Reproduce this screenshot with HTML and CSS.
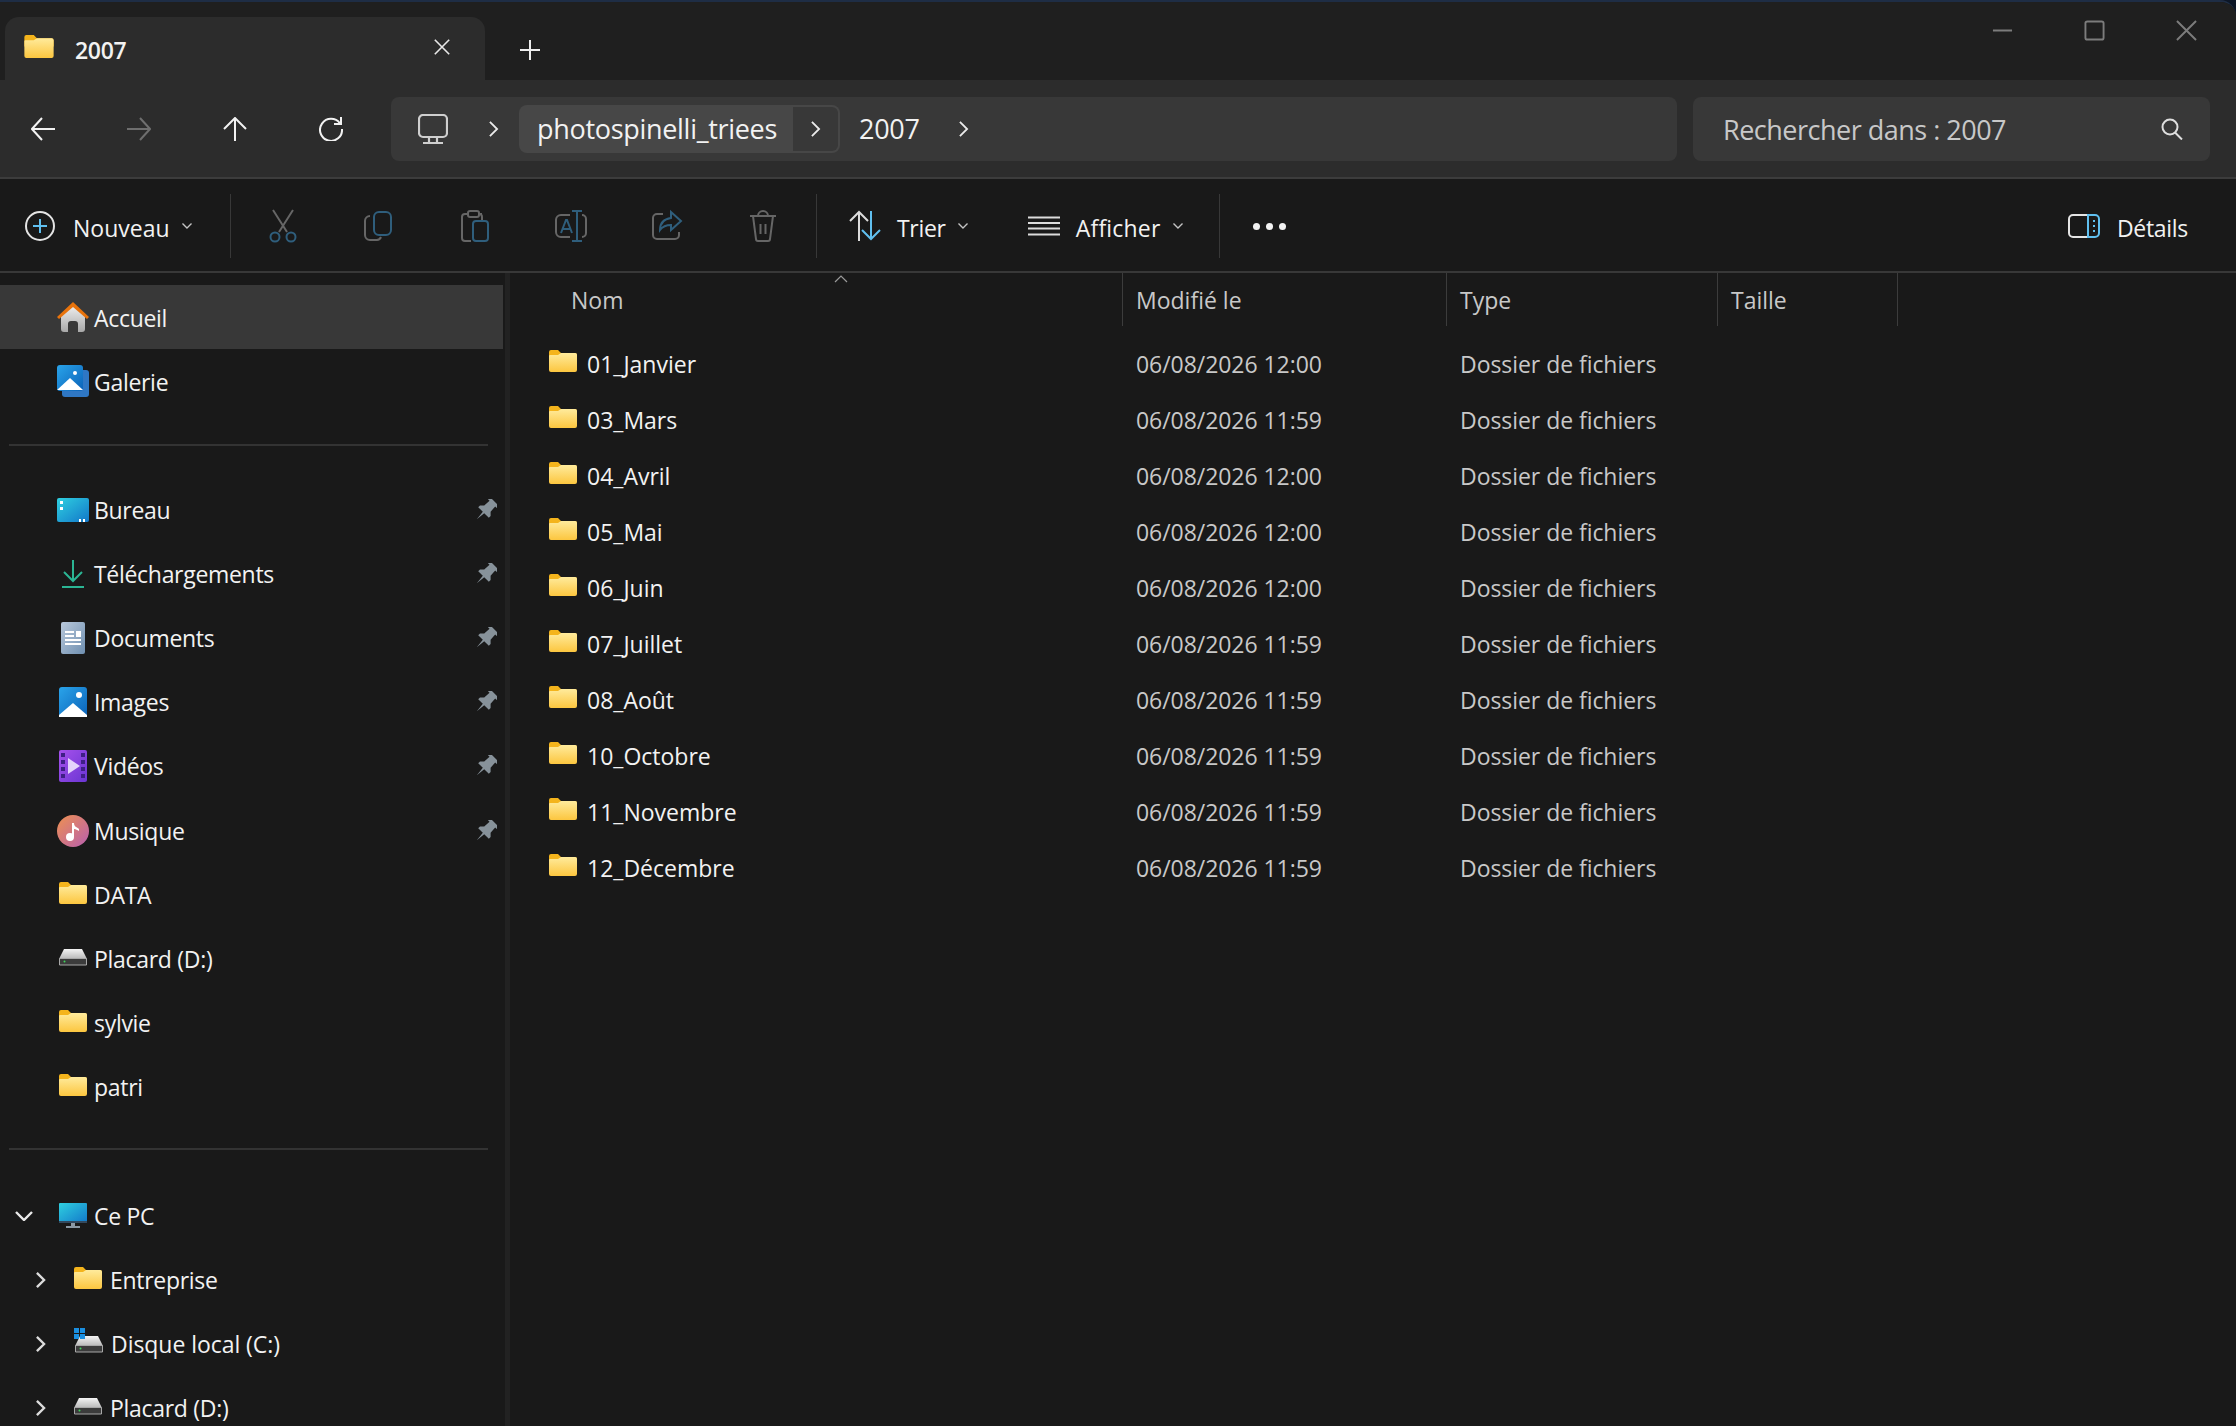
FILE: index.html
```html
<!DOCTYPE html>
<html lang="fr">
<head>
  <meta charset="UTF-8" />
  <title>2007 - Explorateur de fichiers</title>
  <link rel="stylesheet" href="styles.css">
</head>
<body>

  <!-- Shared icons -->
  <svg class="defs" aria-hidden="true">
    <defs>
      <linearGradient id="gFolder" x1="0" y1="0" x2="0" y2="1"><stop offset="0" stop-color="#ffeb9c"/><stop offset="1" stop-color="#fcc63f"/></linearGradient>
      <linearGradient id="gBlue" x1="0" y1="0" x2="1" y2="1"><stop offset="0" stop-color="#2aa4ea"/><stop offset="1" stop-color="#0b62b8"/></linearGradient>
      <linearGradient id="gCyan" x1="0" y1="0" x2="1" y2="1"><stop offset="0" stop-color="#2fd0e0"/><stop offset="1" stop-color="#1277c9"/></linearGradient>
      <linearGradient id="gDoc" x1="0" y1="0" x2="1" y2="1"><stop offset="0" stop-color="#b9c9dc"/><stop offset="1" stop-color="#6f8fb0"/></linearGradient>
      <linearGradient id="gPurple" x1="0" y1="0" x2="1" y2="1"><stop offset="0" stop-color="#a651ec"/><stop offset="1" stop-color="#6a35d2"/></linearGradient>
      <linearGradient id="gMusic" x1="0" y1="0" x2="1" y2="1"><stop offset="0" stop-color="#ee9150"/><stop offset="1" stop-color="#b85fb0"/></linearGradient>
      <linearGradient id="gHouse" x1="0" y1="0" x2="0" y2="1"><stop offset="0" stop-color="#f0f0f0"/><stop offset="1" stop-color="#a8a8a8"/></linearGradient>
      <linearGradient id="gDrive" x1="0" y1="0" x2="0" y2="1"><stop offset="0" stop-color="#f4f4f4"/><stop offset="1" stop-color="#b8b8b8"/></linearGradient>

      <symbol id="folder" viewBox="0 0 28 22">
        <path fill="#f4b41c" d="M0 2a2 2 0 0 1 2-2h7l3 3h14a2 2 0 0 1 2 2v6H0z"/>
        <path fill="url(#gFolder)" d="M0 6a1 1 0 0 1 1-1h8l3-2h14a2 2 0 0 1 2 2v15a2 2 0 0 1-2 2H2a2 2 0 0 1-2-2z"/>
      </symbol>
      <symbol id="drive" viewBox="0 0 28 18">
        <path fill="url(#gDrive)" d="M5 1h18l5 10H0z"/>
        <path fill="#3b3b3b" stroke="#a8a8a8" d="M.5 10.5h27v6.500h-27z"/>
        <circle cx="5.500" cy="13.500" r="1" fill="#3fd45a"/>
      </symbol>
      <symbol id="pin" viewBox="0 0 22 22">
        <path fill="#87929a" transform="rotate(45 11 11)" d="M5.500-1h11a1 1 0 0 1 0 3H15l.5 7 3 3v2.500H12L11 24l-1-9.500H3.500V12l3-3 .5-7H5.500a1 1 0 0 1 0-3z"/>
      </symbol>
      <symbol id="caret" viewBox="0 0 12 8">
        <path fill="none" stroke="currentColor" stroke-width="1.400" d="M1.500 1.500L6 6l4.500-4.500"/>
      </symbol>
      <symbol id="chev" viewBox="0 0 12 20">
        <path fill="none" stroke="currentColor" stroke-width="2" d="M2 2l8 8-8 8"/>
      </symbol>
      <symbol id="chev-bold" viewBox="0 0 12 20">
        <path fill="none" stroke="currentColor" stroke-width="2.600" d="M2 2l8 8-8 8"/>
      </symbol>
    </defs>
  </svg>

  <div class="window">

    <!-- Tabs -->
    <div class="titlebar">
      <div class="tab">
        <svg class="tab-folder"><use href="#folder"/></svg>
        <span class="tab-name">2007</span>
        <svg class="tab-close" viewBox="0 0 20 20"><path d="M2 2l16 16M18 2L2 18"/></svg>
      </div>
      <svg class="tab-add" viewBox="0 0 20 20"><path d="M10 0v20M0 10h20"/></svg>
      <div class="win-btns">
        <svg class="win-btn" viewBox="0 0 22 22"><path d="M1 11h20"/></svg>
        <svg class="win-btn" viewBox="0 0 22 22"><rect x="1.500" y="1.500" width="19" height="19" rx="2"/></svg>
        <svg class="win-btn" viewBox="0 0 22 22"><path d="M1 1l20 20M21 1L1 21"/></svg>
      </div>
    </div>

    <!-- Address row -->
    <div class="navbar">
      <svg class="nav-icon" viewBox="0 0 24 24"><path d="M24 12H1M11 1L1 12l10 11"/></svg>
      <svg class="nav-icon off" viewBox="0 0 24 24"><path d="M0 12h23M13 1l10 11-10 11"/></svg>
      <svg class="nav-icon" viewBox="0 0 24 24"><path d="M12 24V1M1 12L12 1l11 11"/></svg>
      <svg class="nav-icon" viewBox="0 0 24 24"><path d="M21 6.500A11 11 0 1 0 23 12"/><path d="M22 0v7h-7"/></svg>

      <div class="address">
        <svg class="pc-icon" viewBox="0 0 30 30"><rect x="1" y="1" width="28" height="22" rx="4"/><path d="M11 23v5M19 23v5M5 29h20"/></svg>
        <svg class="crumb-chev"><use href="#chev"/></svg>
        <span class="crumb">photospinelli_triees</span>
        <span class="crumb-split"><svg class="crumb-chev"><use href="#chev"/></svg></span>
        <span class="crumb-last">2007</span>
        <svg class="crumb-chev"><use href="#chev"/></svg>
      </div>

      <div class="search">
        <span class="search-text">Rechercher dans : 2007</span>
        <svg class="search-icon" viewBox="0 0 22 22"><circle cx="9" cy="9" r="7.500"/><path d="M14 14.500l7 7"/></svg>
      </div>
    </div>

    <!-- Command bar -->
    <div class="cmdbar">
      <div class="cmd cmd-new">
        <svg class="cmd-plus" viewBox="0 0 30 30"><circle cx="15" cy="15" r="14"/><path class="accent" d="M15 8v14M8 15h14"/></svg>
        <span>Nouveau</span>
        <svg class="cmd-caret"><use href="#caret"/></svg>
      </div>
      <div class="cmd-sep"></div>

      <div class="cmd-tools">
        <svg class="tool" viewBox="0 0 32 32"><path d="M6 0l14 22M26 0L12 22"/><g class="dim"><circle cx="8" cy="27" r="4.500"/><circle cx="24" cy="27" r="4.500"/></g></svg>
        <svg class="tool" viewBox="0 0 32 32"><path d="M7 6a5 5 0 0 0-5 5v14a5 5 0 0 0 5 5h7a5 5 0 0 0 4-3"/><rect class="dim" x="11" y="2" width="17" height="23" rx="5"/></svg>
        <svg class="tool" viewBox="0 0 32 32"><path d="M9 4H6a3 3 0 0 0-3 3v21a3 3 0 0 0 3 3h6M23 4h-3v0a3 3 0 0 1 3 3v3"/><rect x="9" y="1" width="11" height="6" rx="2"/><rect class="dim" x="14" y="11" width="15" height="20" rx="3"/></svg>
        <svg class="tool" viewBox="0 0 32 32"><path d="M15 5H6a5 5 0 0 0-5 5v12a5 5 0 0 0 5 5h9M27 5a4 4 0 0 1 4 4v14a4 4 0 0 1-4 4"/><g class="dim"><path d="M6 23l5-13h1l5 13M8 19h8"/><path d="M22 1v30M17 1h10M17 31h10"/></g></svg>
        <svg class="tool" viewBox="0 0 32 32"><path d="M12 4H6a4 4 0 0 0-4 4v17a4 4 0 0 0 4 4h18a4 4 0 0 0 4-4v-3"/><path class="dim" d="M20 2l10 9-10 9v-5c-5 0-8 1-11 5 0-7 4-11 11-12z"/></svg>
        <svg class="tool" viewBox="0 0 32 32"><path d="M3 6h26M6 6l3 23a2 2 0 0 0 2 2h10a2 2 0 0 0 2-2l3-23M11 6a5 5 0 0 1 10 0M13.500 14v10M18.500 14v10"/></svg>
      </div>
      <div class="cmd-sep"></div>

      <div class="cmd cmd-sort">
        <svg class="cmd-arrows" viewBox="0 0 32 32"><path d="M10 31V2M1 11l9-9 9 9"/><path class="accent" d="M22 1v28M13 20l9 9 9-9"/></svg>
        <span>Trier</span>
        <svg class="cmd-caret"><use href="#caret"/></svg>
      </div>
      <div class="cmd cmd-view">
        <svg class="cmd-lines" viewBox="0 0 32 20"><path d="M0 1.500h32M0 7h32M0 12.500h32M0 18.500h32"/></svg>
        <span>Afficher</span>
        <svg class="cmd-caret"><use href="#caret"/></svg>
      </div>
      <div class="cmd-sep"></div>

      <div class="cmd-more"><i></i><i></i><i></i></div>

      <div class="cmd cmd-details">
        <svg class="cmd-panel" viewBox="0 0 32 24"><path d="M20 1H5a4 4 0 0 0-4 4v14a4 4 0 0 0 4 4h15"/><path class="accent" d="M20 1h7a4 4 0 0 1 4 4v14a4 4 0 0 1-4 4h-7zM25 7h2M25 12h2M25 17h2"/></svg>
        <span>Détails</span>
      </div>
    </div>

    <div class="main">

      <!-- Navigation pane -->
      <nav class="sidebar">
        <div class="row row-top active">
          <svg class="row-icon home" viewBox="0 0 32 30"><path fill="url(#gHouse)" d="M4 12L16 3l12 9v15a3 3 0 0 1-3 3h-4v-8a3 3 0 0 0-3-3h-4a3 3 0 0 0-3 3v8H7a3 3 0 0 1-3-3z"/><path fill="#e8730c" d="M16 0l16 15-2 2L16 5 2 17l-2-2z"/></svg>
          <span>Accueil</span>
        </div>
        <div class="row row-top">
          <svg class="row-icon square" viewBox="0 0 32 32"><rect x="5" y="5" width="27" height="27" rx="3" fill="#2f77c4"/><rect width="26" height="26" rx="3" fill="url(#gBlue)"/><path fill="#fff" d="M0 25l13-12 13 12z"/><circle cx="18" cy="8" r="2" fill="#fff"/></svg>
          <span>Galerie</span>
        </div>
        <div class="sep"></div>
        <div class="row">
          <svg class="row-icon" viewBox="0 0 32 24"><rect width="32" height="24" rx="2" fill="url(#gCyan)"/><path fill="#fff" d="M3 3h3v3H3zM3 9h3v3H3zM22 21h2v3h-2zM26 21h2v3h-2z"/></svg>
          <span>Bureau</span>
          <svg class="pin"><use href="#pin"/></svg>
        </div>
        <div class="row">
          <svg class="row-icon" viewBox="0 0 32 28"><path fill="none" stroke="#2bb594" stroke-width="2" d="M16 0v21M7 12l9 9 9-9M5 27h22"/></svg>
          <span>Téléchargements</span>
          <svg class="pin"><use href="#pin"/></svg>
        </div>
        <div class="row">
          <svg class="row-icon square" viewBox="0 0 32 32"><rect x="4" width="24" height="32" rx="2" fill="url(#gDoc)"/><path fill="#fff" d="M8 9h9v2H8zM8 13h9v2H8zM8 17h16v2H8zM8 21h16v2H8zM19 9h5v6h-5z"/></svg>
          <span>Documents</span>
          <svg class="pin"><use href="#pin"/></svg>
        </div>
        <div class="row">
          <svg class="row-icon square" viewBox="0 0 32 32"><rect x="2" y="1" width="28" height="30" rx="3" fill="url(#gBlue)"/><path fill="#fff" d="M2 29L16 17l14 12v2H2z"/><circle cx="22" cy="9" r="3" fill="#fff"/></svg>
          <span>Images</span>
          <svg class="pin"><use href="#pin"/></svg>
        </div>
        <div class="row">
          <svg class="row-icon square" viewBox="0 0 32 32"><rect x="2" width="28" height="32" rx="2" fill="url(#gPurple)"/><path fill="#3f1f86" d="M4 3h4v4H4zM4 10h4v4H4zM4 17h4v4H4zM4 24h4v4H4zM24 3h4v4h-4zM24 10h4v4h-4zM24 17h4v4h-4zM24 24h4v4h-4z"/><path fill="#e4d2fb" d="M11 8l12 8-12 8z"/></svg>
          <span>Vidéos</span>
          <svg class="pin"><use href="#pin"/></svg>
        </div>
        <div class="row">
          <svg class="row-icon square" viewBox="0 0 32 32"><circle cx="16" cy="16" r="16" fill="url(#gMusic)"/><circle cx="13" cy="22" r="4" fill="#fff"/><path fill="#fff" d="M15 8h2c0 4 3 4 5 6v2c-2-1-3-2-5-2v8h-2z"/></svg>
          <span>Musique</span>
          <svg class="pin"><use href="#pin"/></svg>
        </div>
        <div class="row"><svg class="row-icon folder"><use href="#folder"/></svg><span>DATA</span></div>
        <div class="row"><svg class="row-icon drive"><use href="#drive"/></svg><span>Placard (D:)</span></div>
        <div class="row"><svg class="row-icon folder"><use href="#folder"/></svg><span>sylvie</span></div>
        <div class="row"><svg class="row-icon folder"><use href="#folder"/></svg><span>patri</span></div>
        <div class="sep sep-tree"></div>
        <div class="row tree">
          <svg class="tree-open" viewBox="0 0 18 10"><path d="M1 1l8 8 8-8"/></svg>
          <svg class="row-icon pc" viewBox="0 0 28 26"><rect width="28" height="20" rx="1" fill="url(#gCyan)"/><rect y="18" width="28" height="2" fill="#33495e"/><path fill="#8b98a3" d="M12 20h4v3h-4zM7 23h14v2H7z"/></svg>
          <span>Ce PC</span>
        </div>
        <div class="row tree sub">
          <svg class="tree-closed"><use href="#chev-bold"/></svg>
          <svg class="row-icon folder"><use href="#folder"/></svg>
          <span>Entreprise</span>
        </div>
        <div class="row tree sub">
          <svg class="tree-closed"><use href="#chev-bold"/></svg>
          <svg class="row-icon disk" viewBox="0 0 30 26"><use href="#drive" x="1" y="7" width="28" height="18"/><path fill="#1a8fe0" d="M0 0h5v5H0zM6 0h5v5H6zM0 6h5v5H0zM6 6h5v5H6z"/></svg>
          <span>Disque local (C:)</span>
        </div>
        <div class="row tree sub">
          <svg class="tree-closed"><use href="#chev-bold"/></svg>
          <svg class="row-icon drive"><use href="#drive"/></svg>
          <span>Placard (D:)</span>
        </div>
      </nav>

      <!-- File list -->
      <section class="files">
        <div class="list-head">
          <div class="col col-name">Nom<svg class="sort-caret" viewBox="0 0 14 8"><path d="M1 7l6-6 6 6"/></svg></div>
          <div class="col">Modifié le</div>
          <div class="col">Type</div>
          <div class="col">Taille</div>
        </div>
        <div class="list-body">
          <div class="file"><div class="file-name"><svg class="file-icon"><use href="#folder"/></svg>01_Janvier</div><div>06/08/2026 12:00</div><div>Dossier de fichiers</div></div>
          <div class="file"><div class="file-name"><svg class="file-icon"><use href="#folder"/></svg>03_Mars</div><div>06/08/2026 11:59</div><div>Dossier de fichiers</div></div>
          <div class="file"><div class="file-name"><svg class="file-icon"><use href="#folder"/></svg>04_Avril</div><div>06/08/2026 12:00</div><div>Dossier de fichiers</div></div>
          <div class="file"><div class="file-name"><svg class="file-icon"><use href="#folder"/></svg>05_Mai</div><div>06/08/2026 12:00</div><div>Dossier de fichiers</div></div>
          <div class="file"><div class="file-name"><svg class="file-icon"><use href="#folder"/></svg>06_Juin</div><div>06/08/2026 12:00</div><div>Dossier de fichiers</div></div>
          <div class="file"><div class="file-name"><svg class="file-icon"><use href="#folder"/></svg>07_Juillet</div><div>06/08/2026 11:59</div><div>Dossier de fichiers</div></div>
          <div class="file"><div class="file-name"><svg class="file-icon"><use href="#folder"/></svg>08_Août</div><div>06/08/2026 11:59</div><div>Dossier de fichiers</div></div>
          <div class="file"><div class="file-name"><svg class="file-icon"><use href="#folder"/></svg>10_Octobre</div><div>06/08/2026 11:59</div><div>Dossier de fichiers</div></div>
          <div class="file"><div class="file-name"><svg class="file-icon"><use href="#folder"/></svg>11_Novembre</div><div>06/08/2026 11:59</div><div>Dossier de fichiers</div></div>
          <div class="file"><div class="file-name"><svg class="file-icon"><use href="#folder"/></svg>12_Décembre</div><div>06/08/2026 11:59</div><div>Dossier de fichiers</div></div>
        </div>
      </section>
    </div>
  </div>

</body>
</html>
```

FILE: styles.css
```css
/* --- Reset & Layout --- */
* {
  box-sizing: border-box;
  margin: 0;
  padding: 0;
}
html, body {
  height: 100%;
}
body {
  font-family: "Open Sans", "Noto Sans", sans-serif;
  font-size: 23px;
  letter-spacing: -0.3px;
  color: #f2f2f2;
  background: #0c1626;
  overflow: hidden;
}
svg {
  display: block;
  flex: none;
}
.defs {
  position: absolute;
  width: 0;
  height: 0;
}
.window {
  height: 100%;
  display: flex;
  flex-direction: column;
  background: #191919;
  border-top: 2px solid #1e2d45;
  border-top-right-radius: 16px;
  overflow: hidden;
}

/* --- Tabs --- */
.titlebar {
  height: 78px;
  flex: none;
  display: flex;
  align-items: flex-end;
  padding-left: 5px;
  background: #1f1f1f;
}
.tab {
  width: 480px;
  height: 63px;
  display: flex;
  align-items: center;
  padding: 0 34px 0 19px;
  background: #2c2c2c;
  border-radius: 14px 14px 0 0;
}
.tab-folder {
  width: 30px;
  height: 23px;
  margin-bottom: 4px;
}
.tab-name {
  margin: 2px 0 0 21px;
  font-weight: 600;
}
.tab-close {
  width: 18px;
  height: 18px;
  margin-left: auto;
  margin-bottom: 4px;
  fill: none;
  stroke: #e8e8e8;
  stroke-width: 1.8;
}
.tab-add {
  width: 20px;
  height: 20px;
  margin: 0 0 20px 35px;
  fill: none;
  stroke: #eee;
  stroke-width: 2;
}
.win-btns {
  display: flex;
  align-items: center;
  gap: 71px;
  margin-left: auto;
  padding-right: 39px;
  align-self: flex-start;
  margin-top: 18px;
}
.win-btn {
  width: 21px;
  height: 21px;
  fill: none;
  stroke: #7c7c7c;
  stroke-width: 2;
}

/* --- Address row --- */
.navbar {
  height: 99px;
  flex: none;
  display: flex;
  align-items: center;
  gap: 72px;
  padding: 0 26px 0 31px;
  background: #2c2c2c;
  border-bottom: 2px solid #3c3c3c;
}
.nav-icon {
  width: 24px;
  height: 24px;
  fill: none;
  stroke: #f2f2f2;
  stroke-width: 2;
}
.nav-icon.off {
  stroke: #6e6e6e;
}
.address {
  flex: 1;
  height: 64px;
  margin-left: -24px;
  display: flex;
  align-items: center;
  padding-left: 27px;
  background: #383838;
  border-radius: 8px;
  font-size: 27px;
}
.pc-icon {
  width: 30px;
  height: 30px;
  fill: none;
  stroke: #cfcfcf;
  stroke-width: 2.200;
}
.crumb-chev {
  width: 11px;
  height: 18px;
  color: #ececec;
}
.pc-icon + .crumb-chev {
  margin: 0 20px 0 40px;
}
.crumb {
  height: 48px;
  display: flex;
  align-items: center;
  padding: 0 16px 0 18px;
  background: #474747;
  border-radius: 8px 0 0 8px;
}
.crumb-split {
  width: 47px;
  height: 48px;
  display: flex;
  align-items: center;
  justify-content: center;
  border: 2px solid #474747;
  border-left: 0;
  border-radius: 0 8px 8px 0;
}
.crumb-last {
  margin: 0 38px 0 19px;
}
.search {
  width: 517px;
  height: 64px;
  margin-left: -56px;
  display: flex;
  align-items: center;
  justify-content: space-between;
  padding: 0 27px 0 30px;
  background: #383838;
  border-radius: 8px;
  font-size: 27px;
  color: #c8c8c8;
}
.search-text {
  margin-top: 2px;
  letter-spacing: -0.5px;
}
.search-icon {
  width: 22px;
  height: 22px;
  fill: none;
  stroke: #dedede;
  stroke-width: 2;
}

/* --- Command bar --- */
.cmdbar {
  height: 94px;
  flex: none;
  display: flex;
  align-items: center;
  padding: 2px 0 0 25px;
  background: #191919;
  border-bottom: 2px solid #383838;
}
.cmd {
  display: flex;
  align-items: center;
}
.cmd span {
  margin-top: 3px;
}
.cmd-caret {
  width: 12px;
  height: 8px;
  margin-left: 11px;
  color: #c4c4c4;
}
.cmd-sep {
  width: 1px;
  height: 64px;
  background: #383838;
}
.cmd-new {
  width: 205px;
}
.cmd-new span {
  margin-left: -1px;
  letter-spacing: 0;
}
.cmd-plus {
  width: 30px;
  height: 30px;
  margin-right: 19px;
  fill: none;
  stroke: #e4e4e4;
  stroke-width: 2;
}
.accent {
  stroke: #60c0f0;
}
.cmd-tools {
  display: flex;
  gap: 64px;
  width: 585px;
  padding-left: 36px;
}
.tool {
  width: 32px;
  height: 32px;
  fill: none;
  stroke: #666;
  stroke-width: 2;
  overflow: visible;
}
.dim {
  stroke: #2f5e7c;
}
.cmd-sort {
  margin-left: 32px;
}
.cmd-arrows {
  width: 32px;
  height: 32px;
  margin-right: 16px;
  fill: none;
  stroke: #dcdcdc;
  stroke-width: 2;
}
.cmd-view {
  margin-left: 59px;
}
.cmd-view span {
  letter-spacing: 0.2px;
}
.cmd-lines {
  width: 32px;
  height: 20px;
  margin-right: 16px;
  fill: none;
  stroke: #dcdcdc;
  stroke-width: 2;
}
.cmd-view .cmd-caret {
  margin-right: 35px;
}
.cmd-more {
  display: flex;
  gap: 6px;
  margin-left: 33px;
}
.cmd-more i {
  width: 7px;
  height: 7px;
  border-radius: 50%;
  background: #f2f2f2;
}
.cmd-details {
  margin-left: auto;
  padding-right: 48px;
}
.cmd-panel {
  width: 32px;
  height: 24px;
  margin-right: 17px;
  fill: none;
  stroke: #e4e4e4;
  stroke-width: 2;
}

/* --- Main area --- */
.main {
  flex: 1;
  min-height: 0;
  display: flex;
}

/* --- Navigation pane --- */
.sidebar {
  width: 510px;
  flex: none;
  padding-top: 12px;
  border-right: 5px solid #222;
}
.row {
  height: 64.2px;
  display: flex;
  align-items: center;
  padding: 0 8px 0 57px;
}
.row.active {
  background: #383838;
  margin-right: 2px;
}
.row-top span {
  padding-top: 2px;
}
.row-icon {
  width: 32px;
  height: 30px;
  margin-right: 5px;
}
.row-icon.square {
  height: 32px;
}
.row-icon.folder {
  width: 28px;
  height: 22px;
  margin: 0 7px 4px 2px;
}
.row-icon.drive {
  width: 28px;
  height: 18px;
  margin: 0 7px 4px 2px;
}
.row-icon.pc {
  width: 28px;
  height: 26px;
  margin: 0 7px 0 0;
}
.row-icon.disk {
  width: 30px;
  height: 26px;
  margin: 0 7px 6px 2px;
}
.row-icon.disk + span {
  letter-spacing: -0.05px;
}
.pin {
  width: 22px;
  height: 22px;
  margin-left: auto;
}
.sep {
  height: 64.2px;
  display: flex;
  align-items: center;
  padding: 0 17px 0 9px;
}
.sep::before {
  content: "";
  flex: 1;
  height: 2px;
  background: #333;
}
.sep-tree {
  padding-bottom: 5px;
}
.row.tree {
  padding-left: 15px;
}
.tree-open {
  width: 18px;
  height: 10px;
  margin-right: 26px;
  fill: none;
  stroke: #eaeaea;
  stroke-width: 2.400;
}
.row.sub {
  padding-left: 35px;
}
.row.sub .row-icon.folder,
.row.sub .row-icon.drive {
  margin-right: 8px;
}
.tree-closed {
  width: 11px;
  height: 18px;
  margin-right: 26px;
  color: #dcdcdc;
}

/* --- File list --- */
.files {
  flex: 1;
  min-width: 0;
}
.list-head,
.file {
  display: grid;
  grid-template-columns: 613px 324px 271px 180px;
}
.list-head {
  height: 53px;
  color: #c8c8c8;
  letter-spacing: 0;
}
.col {
  position: relative;
  display: flex;
  align-items: center;
  padding: 1px 0 0 13px;
  border-right: 1px solid #3c3c3c;
}
.col-name {
  padding-left: 61px;
}
.sort-caret {
  position: absolute;
  left: 324px;
  top: 2px;
  width: 14px;
  height: 8px;
  fill: none;
  stroke: #9a9a9a;
  stroke-width: 1.200;
}
.list-body {
  padding-top: 10px;
}
.file {
  height: 56px;
  align-items: center;
  color: #c8c8c8;
  letter-spacing: -0.05px;
}
.file > div:not(.file-name) {
  padding-left: 13px;
}
.file-name {
  display: flex;
  align-items: center;
  padding-left: 39px;
  color: #f2f2f2;
  letter-spacing: 0;
}
.file-icon {
  width: 28px;
  height: 22px;
  margin: 0 10px 6px 0;
}
```
